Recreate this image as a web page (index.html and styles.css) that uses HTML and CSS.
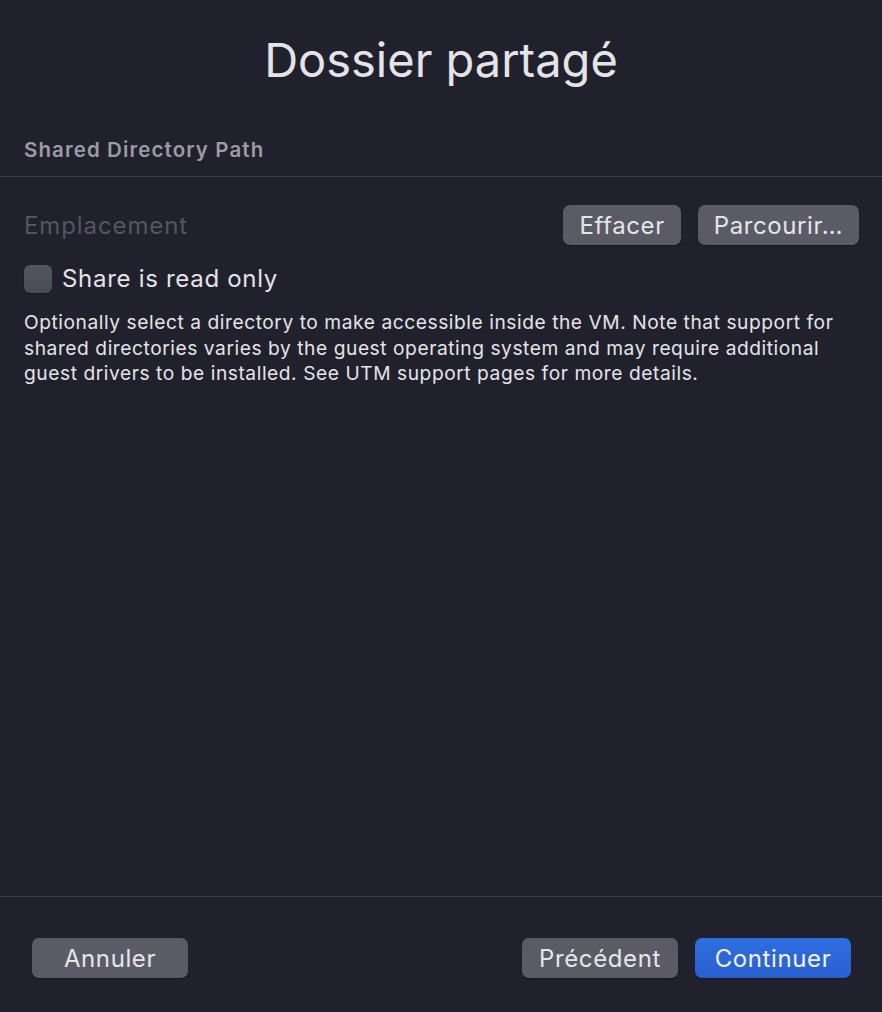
FILE: index.html
```html
<!DOCTYPE html>
<html>
<head>
  <title>Dossier partagé</title>
  <link rel="stylesheet" href="styles.css">
</head>
<body>
  <div class="sheet">
    <div class="main">
      <h1 class="title">Dossier partagé</h1>
      <div class="section-head">Shared Directory Path</div>
      <div class="section-body">
        <div class="path-row">
          <span class="placeholder">Emplacement</span>
          <div class="btns">
            <button type="button" class="btn">Effacer</button>
            <button type="button" class="btn">Parcourir…</button>
          </div>
        </div>
        <label class="check">
          <span class="box"></span>
          Share is read only
        </label>
        <p class="note">Optionally select a directory to make accessible inside the VM. Note that support for shared directories varies by the guest operating system and may require additional guest drivers to be installed. See UTM support pages for more details.</p>
      </div>
    </div>
    <div class="footer">
      <button type="button" class="btn wide">Annuler</button>
      <div class="btns">
        <button type="button" class="btn wide">Précédent</button>
        <button type="button" class="btn wide primary">Continuer</button>
      </div>
    </div>
  </div>
</body>
</html>
```

FILE: styles.css
```css
html, body { margin: 0; height: 100%; }
body { background: #21212d; color: #e4e4e8; font-family: Inter, "Noto Sans", sans-serif; }
.sheet { height: 100vh; display: flex; flex-direction: column; }
.main { flex: 1; }
.title { margin: 0; padding-top: 32px; height: 88px; text-align: center; font-weight: 400; font-size: 47px; line-height: 56px; color: #e4e4e8; }
.section-head { padding: 17px 24px 0; height: 39px; font-size: 20.5px; font-weight: 600; letter-spacing: 1.1px; color: #9c9ca3; border-bottom: 1px solid #3b3b46; }
.section-body { padding: 28px 23px 0 24px; }
.path-row { display: flex; justify-content: space-between; align-items: center; }
.placeholder { font-size: 24px; letter-spacing: 0.9px; color: #55555f; }
.btns { display: flex; gap: 17px; }
.btn { height: 40px; padding: 0 16px; border: none; border-radius: 7px; background: #5b5b65; color: #e6e6ea; font-family: inherit; font-size: 24px; letter-spacing: 0.6px; box-shadow: 0 1px 1px rgba(0,0,0,0.3); }
.check { display: flex; align-items: center; gap: 10px; margin-top: 19px; font-size: 24px; letter-spacing: 0.7px; }
.box { width: 28px; height: 28px; border-radius: 6px; background: linear-gradient(#55555f, #4a4a54); box-shadow: 0 1px 1px rgba(0,0,0,0.35); }
.note { margin: 17px 0 0; font-size: 19.2px; line-height: 25.5px; letter-spacing: 0.55px; color: #e4e4e8; }
.footer { box-sizing: border-box; border-top: 1px solid #3b3b46; height: 116px; padding: 7px 31px 0 32px; display: flex; justify-content: space-between; align-items: center; }
.wide { width: 156px; padding: 0; }
.primary { background: linear-gradient(#2f6ee0, #2a5fcf); color: #f2f2f7; }
```
